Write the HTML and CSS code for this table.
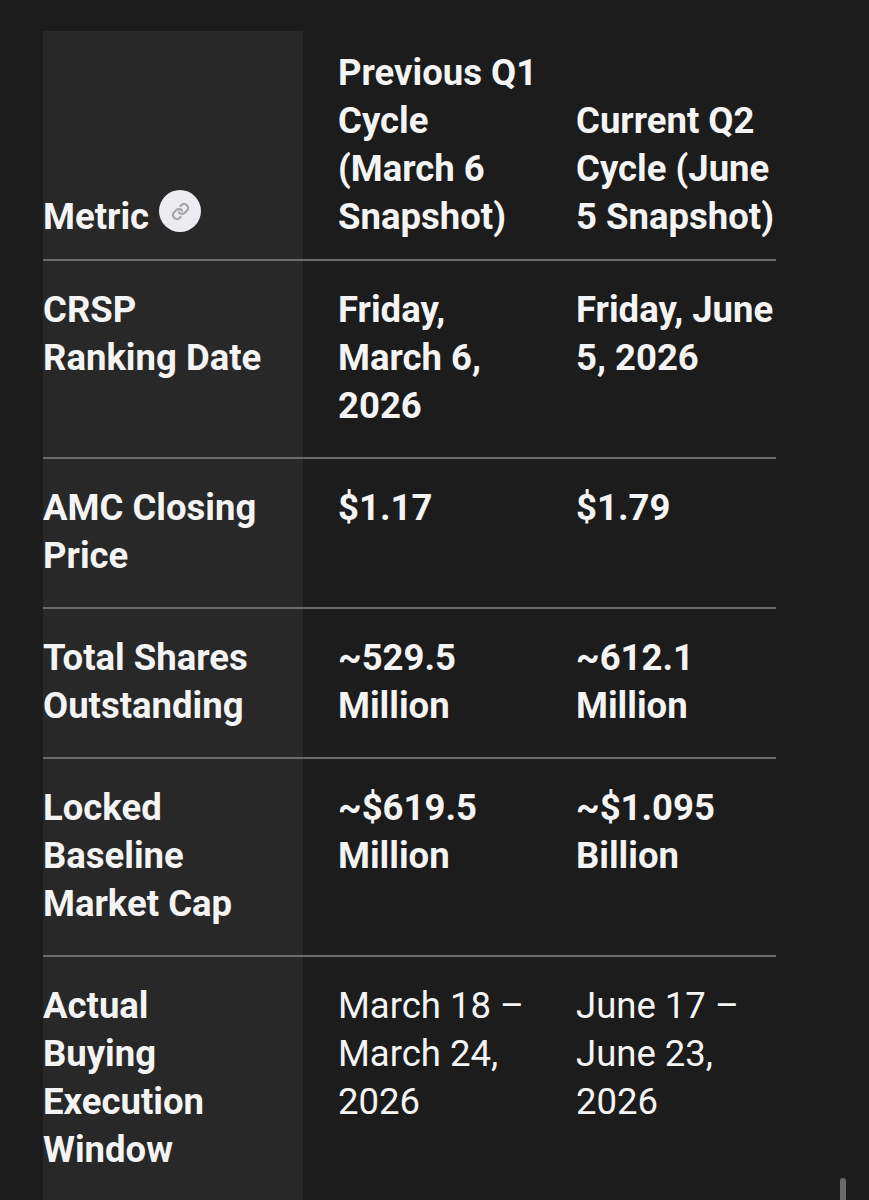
FILE: index.html
```html
<!DOCTYPE html>
<html lang="en">
<head>
<meta charset="utf-8">
<title>CRSP Ranking Comparison</title>
<link rel="stylesheet" href="styles.css">
</head>
<body>
<table class="cmp">
  <colgroup>
    <col class="c1">
    <col class="c2">
    <col class="c3">
  </colgroup>
  <thead>
    <tr>
      <th class="metric">Metric <span class="anchor"><svg viewBox="0 0 24 24" width="19" height="19" fill="none" stroke="#a6a6aa" stroke-width="2.7" stroke-linecap="round" stroke-linejoin="round"><path d="M10 13a5 5 0 0 0 7.5.5l3-3a5 5 0 0 0-7-7l-1.7 1.7"/><path d="M14 11a5 5 0 0 0-7.5-.5l-3 3a5 5 0 0 0 7 7l1.7-1.7"/></svg></span></th>
      <th>Previous Q1 Cycle (March 6 Snapshot)</th>
      <th>Current Q2 Cycle (June 5 Snapshot)</th>
    </tr>
  </thead>
  <tbody>
    <tr>
      <td class="metric">CRSP Ranking Date</td>
      <td class="val">Friday, March 6, 2026</td>
      <td class="val">Friday, June 5, 2026</td>
    </tr>
    <tr>
      <td class="metric">AMC Closing Price</td>
      <td class="val">$1.17</td>
      <td class="val">$1.79</td>
    </tr>
    <tr>
      <td class="metric">Total Shares Outstanding</td>
      <td class="val">~529.5 Million</td>
      <td class="val">~612.1 Million</td>
    </tr>
    <tr>
      <td class="metric">Locked Baseline Market Cap</td>
      <td class="val">~$619.5 Million</td>
      <td class="val">~$1.095 Billion</td>
    </tr>
    <tr class="last">
      <td class="metric">Actual Buying Execution Window</td>
      <td class="plain">March 18 – March 24, 2026</td>
      <td class="plain">June 17 – June 23, 2026</td>
    </tr>
  </tbody>
</table>
<div class="scrollbar"></div>
</body>
</html>
```
FILE: styles.css
```css
html, body {
  margin: 0;
  padding: 0;
  background: #1c1c1c;
  height: 100%;
  overflow: hidden;
}
body {
  font-family: Roboto, "Liberation Sans", sans-serif;
  color: #f4f4f4;
  font-size: 36.5px;
  line-height: 48px;
}
.cmp {
  border-collapse: collapse;
  margin: 31px 0 0 43px;
  table-layout: fixed;
  width: 733px;
}
.c1 { width: 260px; }
.c2 { width: 238px; }
.c3 { width: 235px; }
.cmp th, .cmp td {
  text-align: left;
  vertical-align: top;
  padding: 25px 0 27px 35px;
  font-weight: 700;
}
.cmp th {
  vertical-align: bottom;
  padding-top: 18px;
  padding-bottom: 18px;
}
.cmp tr {
  border-bottom: 2px solid #6b6b6b;
}
.cmp tr.last {
  border-bottom: none;
}
.cmp .metric {
  background: #282828;
  padding-left: 0;
  padding-right: 36px;
}
.cmp .plain {
  font-weight: 400;
}
.cmp tr.last td {
  padding-bottom: 80px;
}
.anchor {
  display: inline-block;
  overflow: hidden;
  width: 42px;
  height: 42px;
  border-radius: 50%;
  background: #ececf0;
  vertical-align: -3px;
  margin-top: -6px;
  margin-left: 1px;
}
.anchor svg {
  display: block;
  margin: 12px auto 0;
}
.scrollbar {
  position: fixed;
  left: 840px;
  top: 1178px;
  width: 6px;
  height: 40px;
  border-radius: 3px;
  background: #6a6a6a;
}
```
